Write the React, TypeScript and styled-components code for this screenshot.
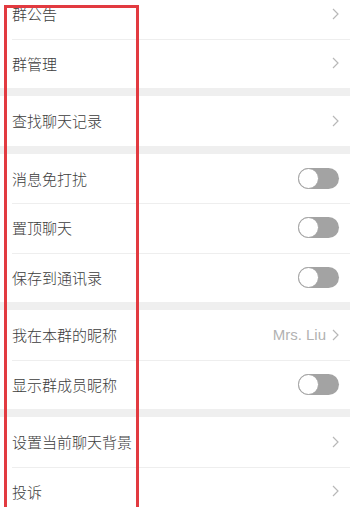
import React from 'react'
import styled, { createGlobalStyle } from 'styled-components'

const GlobalStyle = createGlobalStyle`
  html, body {
    margin: 0;
    padding: 0;
    background: #efefef;
  }
  body {
    font-family: "Noto Sans CJK SC", "Liberation Sans", sans-serif;
    overflow: hidden;
  }
`

const Screen = styled.div`
  position: relative;
  width: 350px;
  height: 507px;
  overflow: hidden;
  background: #efefef;
`

const List = styled.div`
  margin-top: -11px;
  display: flex;
  flex-direction: column;
  gap: 8px;
`

const Group = styled.div`
  background: #fff;
  display: flex;
  flex-direction: column;
`

const Row = styled.div`
  height: 49.5px;
  display: flex;
  align-items: center;
  padding: 0 11px 0 12px;
  position: relative;

  & + &::before {
    content: '';
    position: absolute;
    top: 0;
    left: 12px;
    right: 0;
    height: 1px;
    background: #eeeeee;
  }
`

const Label = styled.span`
  flex: 1;
  font-size: 15px;
  font-weight: 300;
  color: #3c3c3c;
`

const Value = styled.span`
  font-family: "Liberation Sans", sans-serif;
  font-size: 15px;
  color: #b2b2b2;
  margin-right: 6px;
`

const Track = styled.span`
  width: 41px;
  height: 21px;
  border-radius: 11px;
  background: #a3a3a3;
  position: relative;
`

const Knob = styled.span`
  position: absolute;
  left: 0;
  top: 0;
  width: 21px;
  height: 21px;
  box-sizing: border-box;
  border-radius: 50%;
  background: #fff;
  border: 1.5px solid #a3a3a3;
`

const Highlight = styled.div`
  position: absolute;
  left: 4px;
  top: 5px;
  width: 135px;
  height: 540px;
  box-sizing: border-box;
  border: 3px solid #e23a40;
  pointer-events: none;
`

const Chevron = () => (
  <svg width="7" height="12" viewBox="0 0 7 12">
    <path d="M1 1l5 5-5 5" fill="none" stroke="#b8b8b8" strokeWidth="1.2" />
  </svg>
)

const Toggle = () => (
  <Track>
    <Knob />
  </Track>
)

type Item = { label: string; kind: 'link' | 'toggle'; value?: string }

const groups: Item[][] = [
  [
    { label: '群公告', kind: 'link' },
    { label: '群管理', kind: 'link' },
  ],
  [{ label: '查找聊天记录', kind: 'link' }],
  [
    { label: '消息免打扰', kind: 'toggle' },
    { label: '置顶聊天', kind: 'toggle' },
    { label: '保存到通讯录', kind: 'toggle' },
  ],
  [
    { label: '我在本群的昵称', kind: 'link', value: 'Mrs. Liu' },
    { label: '显示群成员昵称', kind: 'toggle' },
  ],
  [
    { label: '设置当前聊天背景', kind: 'link' },
    { label: '投诉', kind: 'link' },
  ],
]

export default function App() {
  return (
    <>
      <GlobalStyle />
      <Screen>
        <List>
          {groups.map((items, i) => (
            <Group key={i}>
              {items.map((item) => (
                <Row key={item.label}>
                  <Label>{item.label}</Label>
                  {item.value && <Value>{item.value}</Value>}
                  {item.kind === 'link' ? <Chevron /> : <Toggle />}
                </Row>
              ))}
            </Group>
          ))}
        </List>
        <Highlight />
      </Screen>
    </>
  )
}
